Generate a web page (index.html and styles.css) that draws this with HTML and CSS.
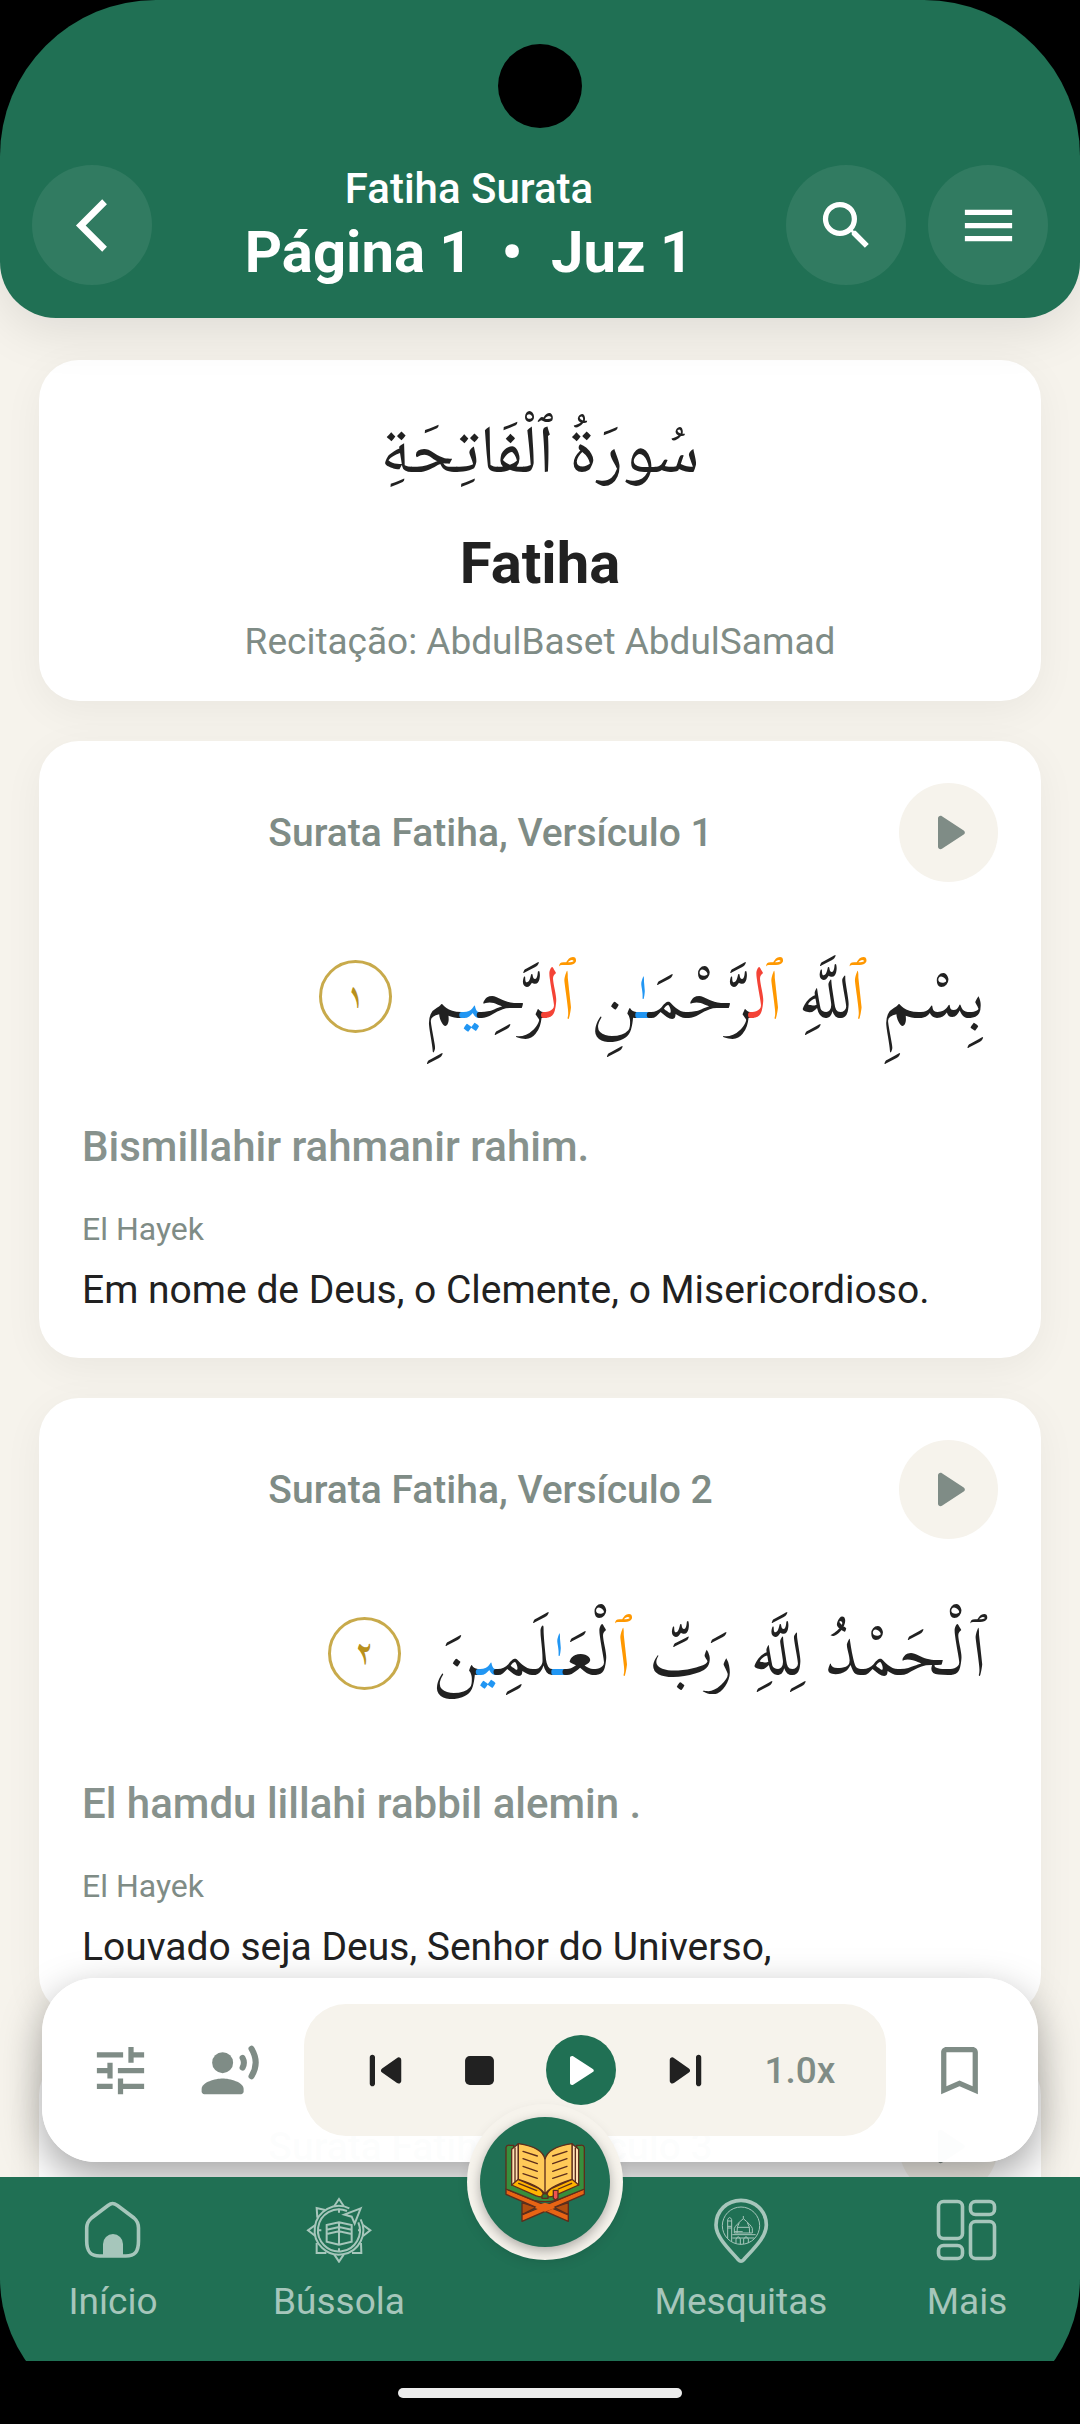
FILE: index.html
```html
<!DOCTYPE html>
<html lang="pt">
<head>
<meta charset="UTF-8">
<meta name="viewport" content="width=device-width, initial-scale=1.0">
<title>Fatiha Surata</title>
<link rel="stylesheet" href="styles.css">
</head>
<body>
<div class="screen">

	<header class="header">
		<span class="camera"></span>
		<button class="round-btn" type="button" aria-label="Voltar">
			<svg width="63" height="63" viewBox="0 0 24 24"><path d="M17.5 3.9 15.7 2 5.7 12l10 10 1.8-1.9L9.4 12z" fill="#fff"/></svg>
		</button>
		<div class="header-title">
			<p class="header-sub">Fatiha Surata</p>
			<h1>Página 1&nbsp; •&nbsp; Juz 1</h1>
		</div>
		<div class="header-actions">
			<button class="round-btn" type="button" aria-label="Buscar">
				<svg width="63" height="63" viewBox="0 0 24 24"><path d="M15.500 14h-.79l-.28-.27A6.470 6.470 0 0 0 16 9.500 6.500 6.500 0 1 0 9.500 16c1.610 0 3.090-.59 4.230-1.570l.27.28v.79l5 4.990L20.490 19l-4.990-5zm-6 0a4.500 4.500 0 1 1 0-9 4.500 4.500 0 0 1 0 9z" fill="#fff"/></svg>
			</button>
			<button class="round-btn" type="button" aria-label="Menu">
				<svg width="63" height="63" viewBox="0 0 24 24"><path d="M3 18h18v-2H3v2zm0-5h18v-2H3v2zm0-7v2h18V6H3z" fill="#fff"/></svg>
			</button>
		</div>
	</header>

	<main class="content">
		<section class="card surah">
			<p class="surah-arabic" lang="ar" dir="rtl">سُورَةُ ٱلْفَاتِحَةِ</p>
			<h2>Fatiha</h2>
			<p class="reciter">Recitação: AbdulBaset AbdulSamad</p>
		</section>

		<article class="card">
			<div class="verse-head">
				<h3>Surata Fatiha, Versículo 1</h3>
				<button class="verse-play" type="button" aria-label="Ouvir versículo 1">
					<svg width="63" height="63" viewBox="0 0 24 24"><path d="M8 6.600v10.800c0 .8.900 1.200 1.500.8l8.300-5.400c.6-.4.600-1.200 0-1.600L9.500 5.800C8.900 5.400 8 5.800 8 6.600z" fill="#7f8c86"/></svg>
				</button>
			</div>
			<div class="verse-arabic" lang="ar" dir="rtl">
				<p>بِسْمِ <span class="wasl">ٱ</span>للَّهِ <span class="wasl">ٱ</span><span class="silent">ل</span>رَّحْمَ<span class="madd">ـٰ</span>نِ <span class="wasl">ٱ</span><span class="silent">ل</span>رَّح<span class="madd">ِي</span>مِ</p>
				<span class="verse-number">١</span>
			</div>
			<p class="translit">Bismillahir rahmanir rahim.</p>
			<p class="translator">El Hayek</p>
			<p class="translation">Em nome de Deus, o Clemente, o Misericordioso.</p>
		</article>

		<article class="card">
			<div class="verse-head">
				<h3>Surata Fatiha, Versículo 2</h3>
				<button class="verse-play" type="button" aria-label="Ouvir versículo 2">
					<svg width="63" height="63" viewBox="0 0 24 24"><path d="M8 6.600v10.800c0 .8.900 1.200 1.500.8l8.300-5.400c.6-.4.600-1.200 0-1.600L9.500 5.800C8.900 5.400 8 5.800 8 6.600z" fill="#7f8c86"/></svg>
				</button>
			</div>
			<div class="verse-arabic" lang="ar" dir="rtl">
				<p>ٱلْحَمْدُ لِلَّهِ رَبِّ <span class="wasl">ٱ</span>لْعَ<span class="madd">ـٰ</span>لَم<span class="madd">ِي</span>نَ</p>
				<span class="verse-number">٢</span>
			</div>
			<p class="translit">El hamdu lillahi rabbil alemin .</p>
			<p class="translator">El Hayek</p>
			<p class="translation">Louvado seja Deus, Senhor do Universo,</p>
		</article>

		<article class="card">
			<div class="verse-head">
				<h3>Surata Fatiha, Versículo 3</h3>
				<button class="verse-play" type="button" aria-label="Ouvir versículo 3">
					<svg width="63" height="63" viewBox="0 0 24 24"><path d="M8 6.600v10.800c0 .8.900 1.200 1.500.8l8.300-5.400c.6-.4.600-1.200 0-1.600L9.500 5.800C8.900 5.400 8 5.800 8 6.600z" fill="#7f8c86"/></svg>
				</button>
			</div>
		</article>
	</main>

	<div class="bottom">
		<div class="player">
			<div class="player-tools">
				<button class="icon-btn" type="button" aria-label="Ajustes">
					<svg width="63" height="63" viewBox="0 0 24 24"><path d="M3 17v2h6v-2H3zM3 5v2h10V5H3zm10 16v-2h8v-2h-8v-2h-2v6h2zM7 9v2H3v2h4v2h2V9H7zm14 4v-2H11v2h10zm-6-4h2V7h4V5h-4V3h-2v6z" fill="#7f8c86"/></svg>
				</button>
				<button class="icon-btn" type="button" aria-label="Recitador">
					<svg width="63" height="63" viewBox="0 0 24 24">
						<circle cx="9" cy="9" r="4" fill="#7f8c86"/>
						<path d="M9 15c-2.670 0-8 1.340-8 4v1c0 .55.45 1 1 1h14c.55 0 1-.45 1-1v-1c0-2.660-5.330-4-8-4z" fill="#7f8c86"/>
						<path d="M16.600 7.200q1 1.800 0 3.700M20 3.700q3.200 5.300 0 10.500" fill="none" stroke="#7f8c86" stroke-width="2.300" stroke-linecap="round"/>
					</svg>
				</button>
			</div>
			<div class="player-controls">
				<button class="icon-btn" type="button" aria-label="Anterior">
					<svg width="63" height="63" viewBox="0 0 24 24"><path d="M7 6c.55 0 1 .45 1 1v10c0 .55-.45 1-1 1s-1-.45-1-1V7c0-.55.45-1 1-1zm3.700 6.800 5.700 4c.7.450 1.600 0 1.600-.8V8c0-.8-.9-1.300-1.600-.8l-5.700 4c-.6.400-.6 1.200 0 1.600z" fill="#212121"/></svg>
				</button>
				<button class="icon-btn" type="button" aria-label="Parar">
					<svg width="63" height="63" viewBox="0 0 24 24"><rect x="6.500" y="6.500" width="11" height="11" rx="1.800" fill="#212121"/></svg>
				</button>
				<button class="play-btn" type="button" aria-label="Reproduzir">
					<svg width="63" height="63" viewBox="0 0 24 24"><path d="M8 7.200v9.600c0 .6.700 1 1.200.6l7.500-4.800c.5-.3.500-.9 0-1.200L9.200 6.600C8.700 6.300 8 6.600 8 7.200z" fill="#fff"/></svg>
				</button>
				<button class="icon-btn" type="button" aria-label="Próximo">
					<svg width="63" height="63" viewBox="0 0 24 24"><path d="M17 6c-.55 0-1 .45-1 1v10c0 .55.45 1 1 1s1-.45 1-1V7c0-.55-.45-1-1-1zm-3.700 6.800-5.700 4C6.900 17.250 6 16.800 6 16V8c0-.8.900-1.300 1.600-.8l5.700 4c.6.400.6 1.200 0 1.600z" fill="#212121"/></svg>
				</button>
				<button class="speed-btn" type="button">1.0x</button>
			</div>
			<button class="icon-btn" type="button" aria-label="Favorito">
				<svg width="63" height="63" viewBox="0 0 24 24"><path d="M17 3H7c-1.100 0-2 .9-2 2v16l7-3 7 3V5c0-1.100-.9-2-2-2zm0 15-5-2.180L7 18V5h10v13z" fill="#7f8c86"/></svg>
			</button>
		</div>

		<nav class="nav">
			<a class="nav-item" href="#inicio">
				<svg width="66" height="66" viewBox="0 0 66 66">
					<path d="M28 8.500 11.500 21C8 24 6.700 26.500 6.700 31v13c0 11 4 15 13 15h26c9 0 12.800-4 12.800-15V31c0-4.500-1-7-4.500-10L37.500 8.500c-4-2.700-6-2.700-9.500 0z" fill="none" stroke="currentColor" stroke-width="3.600"/>
					<path d="M23 60V47a10 10 0 0 1 20 0v13z" fill="currentColor"/>
				</svg>
				<span>Início</span>
			</a>
			<a class="nav-item" href="#bussola">
				<svg width="66" height="66" viewBox="108 49 198 198">
					<g fill="none" stroke="currentColor" stroke-width="6">
						<path d="M193 76 207 55l14 21M136 133l-22 16 22 17M279 133l22 16-22 17M193 222l14 21 14-21M165 88l-25-6 2 29M140 187v30h29M246 217h28l-1-30"/>
						<path d="M238 83a73 73 0 1 0 34 33"/>
						<path d="M231 91a63 63 0 1 0 34 34"/>
						<path d="M272 83 223 102l22 6 9 21z"/>
						<path d="M170 133l37-8 38 8v50l-38 9-37-9zM207 125v67M170 147l37-8 38 8M170 160l37-8 38 8M207 84v12M207 203v10M145 149h9M264 149h9"/>
					</g>
				</svg>
				<span>Bússola</span>
			</a>
			<span class="nav-gap"></span>
			<a class="nav-item" href="#mesquitas">
				<svg width="66" height="66" viewBox="84 49 198 198">
					<path d="M183 59c-42 0-75 32-75 74 0 35 35 68 67 104q8 9 16 0c33-36 68-69 68-104 0-42-34-74-76-74z" fill="none" stroke="currentColor" stroke-width="11"/>
					<g fill="none" stroke="currentColor" stroke-width="3">
						<circle cx="183" cy="135" r="56"/>
						<path d="M143 173v-56q6-13 12 0v65M143 121h12M143 137h12M143 142h12M157 162h70M157 172h66M163 157v-14q4-10 27-29 23 19 27 29v14zM190 114v-8M178 126q-8 10-7 31M202 126q8 10 7 31M173 140h34M163 153h25M168 187v-12q7-13 13 0v16M191 190v-15q7-13 14 0v12"/>
					</g>
				</svg>
				<span>Mesquitas</span>
			</a>
			<a class="nav-item" href="#mais">
				<svg width="66" height="66" viewBox="0 0 66 66">
					<g fill="none" stroke="currentColor" stroke-width="3.600">
						<rect x="4.500" y="4.500" width="24" height="37" rx="5"/>
						<rect x="4.500" y="48.500" width="24" height="13" rx="5"/>
						<rect x="36.500" y="4.500" width="24" height="13" rx="5"/>
						<rect x="36.500" y="24.500" width="24" height="37" rx="5"/>
					</g>
				</svg>
				<span>Mais</span>
			</a>
		</nav>

		<a class="quran" href="#alcorao" aria-label="Alcorão">
			<span class="quran-disc">
				<svg width="80" height="80" viewBox="196 156 240 240">
					<g stroke="#5d2d1c" stroke-width="4" stroke-linejoin="round" stroke-linecap="round">
						<path d="M290 352 247 338v36zM343 352l43-14v36z" fill="#b14e0f"/>
						<path d="M199 297v16l187 81v-19z" fill="#e86414"/>
						<path d="M434 297v16L247 394v-19z" fill="#e86414"/>
						<path d="M294 346l22-8 22 8 8 8-30 11-30-11z" fill="#e86414" stroke="none"/>
						<path d="M199 297V172q2-8 12-6h11v119l95 30 94-30V166h11q10-2 12 6v125l-84 34q-34 8-67 0z" fill="#388e3c"/>
						<path d="M216 178l20-17v119l-20 6zM417 178l-20-17v119l20 6z" fill="#ffe0b2"/>
						<path d="M226 174v102M407 174v102" fill="none"/>
						<path d="M216 285l20-17 61 27q12 6 16 24-8 4-25-2zM417 285l-20-17-61 27q-12 6-16 24 8 4 25-2z" fill="#ffb300"/>
						<path d="M236 161q74 11 80 48v107q-4-24-80-48zM397 161q-74 11-81 48v107q5-24 81-48z" fill="#ffca58"/>
						<path d="M250 184l43 14M250 206l43 15M250 229l43 15M250 251l43 14M382 184l-43 14M382 206l-43 15M382 229l-43 15M382 251l-43 14M237 280l54 22M396 280l-40 17" fill="none"/>
						<path d="M307 325v-9q9-10 18 0v9z" fill="#2e7d32"/>
						<path d="M341 301h14v23l-7 6-7-5z" fill="#ef5350"/>
					</g>
				</svg>
			</span>
		</a>
	</div>

	<div class="gesture"><span></span></div>
</div>
</body>
</html>
```
FILE: styles.css
```css
*{
	margin: 0;
	padding: 0;
	box-sizing: border-box;
}
body{
	font-family: Roboto, "Liberation Sans", sans-serif;
	color: #212121;
	background-color: #000;
}
h1, h2, h3{
	font-weight: 500;
}
button{
	display: flex;
	align-items: center;
	justify-content: center;
	border: 0;
	background: none;
	font-family: inherit;
	cursor: pointer;
}
a{
	color: inherit;
	text-decoration: none;
}
svg{
	display: block;
}

.screen{
	display: flex;
	flex-direction: column;
	height: 100vh;
	overflow: hidden;
	border-radius: 156px 156px 146px 146px;
	background-color: #000;
}

/* header */
.header{
	position: relative;
	z-index: 2;
	display: flex;
	align-items: center;
	padding: 164px 32px 32px;
	border-radius: 0 0 56px 56px;
	background-color: #207054;
	box-shadow: 0 12px 52px rgba(0,0,0,0.1);
}
.camera{
	position: absolute;
	top: 44px;
	left: 50%;
	width: 84px;
	height: 84px;
	margin-left: -42px;
	border-radius: 50%;
	background-color: #000;
}
.round-btn{
	width: 120px;
	height: 120px;
	border-radius: 50%;
	background-color: rgba(255,255,255,0.08);
}
.header-title{
	flex: 1;
	text-align: center;
	color: #fff;
}
.header-sub{
	margin-bottom: 5px;
	font-size: 42px;
	font-weight: 500;
	line-height: 49px;
}
.header-title h1{
	font-size: 58px;
	font-weight: 700;
	line-height: 68px;
}
.header-actions{
	display: flex;
	gap: 22px;
}

/* cards, the list runs up under the rounded header */
.content{
	display: flex;
	flex: 1;
	flex-direction: column;
	gap: 40px;
	min-height: 0;
	margin-top: -60px;
	padding: 102px 39px 0;
	overflow: hidden;
	background-color: #f6f3ec;
}
.card{
	flex-shrink: 0;
	padding: 42px 43px;
	border-radius: 40px;
	background-color: #fff;
	box-shadow: 0 10px 40px rgba(0,0,0,0.05);
}
.surah{
	padding: 42px 39px 38px;
	text-align: center;
}
.surah-arabic{
	font-family: "Noto Naskh Arabic", "DejaVu Sans", sans-serif;
	font-size: 68px;
	line-height: 110px;
}
.surah h2{
	margin-top: 17px;
	font-size: 58px;
	font-weight: 700;
	line-height: 68px;
}
.reciter{
	margin-top: 23px;
	font-size: 37px;
	line-height: 43px;
	color: #7f8c86;
}
.verse-head{
	display: flex;
	align-items: center;
}
.verse-head h3{
	flex: 1;
	text-align: center;
	font-size: 39px;
	line-height: 46px;
	color: #7f8c86;
}
.verse-play{
	width: 99px;
	height: 99px;
	border-radius: 50%;
	background-color: #f6f3ec;
}
.verse-arabic{
	display: flex;
	align-items: center;
	gap: 34px;
	height: 150px;
	margin: 39px 12px 51px;
	font-family: "Scheherazade New", Scheherazade, "Amiri Quran", "Noto Naskh Arabic", "DejaVu Sans", sans-serif;
	font-size: 68px;
	line-height: 130px;
}
.wasl{
	color: #ff9800;
}
.silent{
	color: #f44336;
}
.madd{
	color: #2196f3;
}
.verse-number{
	width: 73px;
	height: 73px;
	border: 3px solid #c8aa4b;
	border-radius: 50%;
	text-align: center;
	font-size: 32px;
	font-weight: 700;
	line-height: 64px;
	color: #b8901c;
}
.translit{
	font-size: 42px;
	font-weight: 500;
	line-height: 49px;
	color: #87928d;
}
.translator{
	margin-top: 39px;
	font-size: 32px;
	line-height: 38px;
	color: #7f8c86;
}
.translation{
	margin-top: 16px;
	font-size: 39px;
	line-height: 52px;
}

/* player */
.bottom{
	position: relative;
	z-index: 1;
}
.player{
	position: absolute;
	right: 42px;
	bottom: 100%;
	left: 42px;
	display: flex;
	align-items: center;
	gap: 42px;
	margin-bottom: 15px;
	padding: 26px 47px;
	border-radius: 54px;
	background-color: rgba(255,255,255,0.98);
	box-shadow: 0 15px 40px rgba(0,0,0,0.36);
}
.player-tools{
	display: flex;
	gap: 47px;
}
.player-controls{
	display: flex;
	flex: 1;
	align-items: center;
	justify-content: space-between;
	height: 132px;
	padding: 0 34px 0 50px;
	border-radius: 42px;
	background-color: #f6f3ec;
}
.play-btn{
	width: 70px;
	height: 70px;
	margin: 0 8px 0 4px;
	border-radius: 50%;
	background-color: #207054;
}
.speed-btn{
	width: 104px;
	font-size: 37px;
	font-weight: 500;
	line-height: 43px;
	color: #7f8c86;
}

/* bottom navigation */
.nav{
	position: relative;
	display: flex;
	height: 184px;
	padding-top: 20px;
	background-color: #207054;
	color: #a6c6bb;
}
.nav-item{
	display: flex;
	flex: 1;
	flex-direction: column;
	align-items: center;
	gap: 17px;
	font-size: 37px;
	line-height: 43px;
}
.nav-gap{
	width: 176px;
}
.quran{
	position: absolute;
	top: -73px;
	left: 50%;
	margin-left: -73px;
	padding: 13px;
	border-radius: 50%;
	background-color: #f6f3ec;
	box-shadow: 0 4px 12px rgba(0,0,0,0.08);
}
.quran-disc{
	display: flex;
	align-items: center;
	justify-content: center;
	width: 130px;
	height: 130px;
	border-radius: 50%;
	background-color: #207054;
	box-shadow: 0 4px 12px rgba(0,0,0,0.3);
}
.gesture{
	display: flex;
	justify-content: center;
	height: 63px;
	padding-top: 27px;
	background-color: #000;
}
.gesture span{
	width: 284px;
	height: 10px;
	border-radius: 5px;
	background-color: #ececec;
}
```
